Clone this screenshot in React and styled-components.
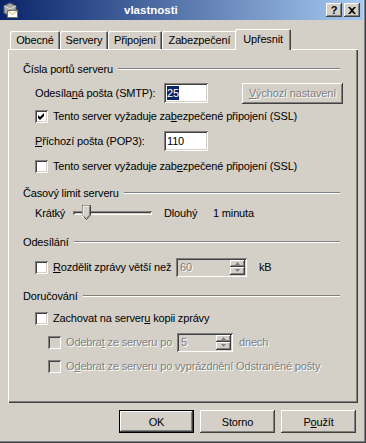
import React from 'react'
import styled, { createGlobalStyle, css } from 'styled-components'

const FACE = '#d4d0c8'
const SHADOW = '#808080'
const DARK = '#404040'
const NAVY = '#0a246a'

const GlobalStyle = createGlobalStyle`
  html, body {
    margin: 0;
    padding: 0;
    background: ${FACE};
  }
  body {
    font-family: 'Liberation Sans', Arial, sans-serif;
    font-size: 11px;
    letter-spacing: -0.16px;
    color: #000;
  }
`

const raised = css`
  box-shadow: inset -1px -1px ${DARK}, inset 1px 1px #fff,
    inset -2px -2px ${SHADOW}, inset 2px 2px ${FACE};
`

const sunken = css`
  box-shadow: inset 1px 1px ${SHADOW}, inset -1px -1px #fff,
    inset 2px 2px ${DARK}, inset -2px -2px ${FACE};
`

const disabledText = css`
  color: ${SHADOW};
  text-shadow: 1px 1px #fff;
`

const Window = styled.div`
  width: 366px;
  height: 443px;
  box-sizing: border-box;
  padding: 0 3px 3px 0;
  background: ${FACE};
  box-shadow: inset -1px -1px ${DARK}, inset -2px -2px ${SHADOW};
  display: flex;
  flex-direction: column;
`

const TitleBar = styled.div`
  height: 20px;
  display: flex;
  align-items: center;
  background: linear-gradient(to right, ${NAVY}, #a6caf0);
`

const IconBox = styled.svg`
  width: 16px;
  height: 16px;
  margin-left: 2px;
  flex: none;
`

const TitleText = styled.div`
  flex: 1;
  margin-left: 106px;
  color: #fff;
  font-weight: bold;
  font-size: 11.5px;
  letter-spacing: 0;
`

const CaptionButtons = styled.div`
  display: flex;
  gap: 2px;
  margin-right: 3px;
`

const CaptionButton = styled.div`
  width: 16px;
  height: 14px;
  background: ${FACE};
  ${raised};
  display: flex;
  align-items: center;
  justify-content: center;
  font-weight: bold;
  font-size: 11px;
  line-height: 1;
`

const Client = styled.div`
  flex: 1;
  display: flex;
  flex-direction: column;
  padding: 0 5px 0 8px;
`

const TabStrip = styled.div`
  height: 21px;
  margin-top: 9px;
  margin-bottom: -1px;
  padding-left: 2px;
  display: flex;
  align-items: flex-end;
  position: relative;
  z-index: 1;
`

const Tab = styled.div`
  width: ${(p) => p.$w}px;
  height: ${(p) => (p.$active ? 21 : 18)}px;
  margin: 0 ${(p) => (p.$active ? -2 : 0)}px ${(p) => (p.$active ? 0 : 1)}px;
  box-sizing: border-box;
  padding-bottom: ${(p) => (p.$active ? 2 : 0)}px;
  flex: none;
  display: flex;
  align-items: center;
  justify-content: center;
  background: ${FACE};
  border-radius: 2px 2px 0 0;
  box-shadow: inset 1px 1px #fff, inset -1px 0 ${DARK}, inset -2px 0 ${SHADOW};
  white-space: nowrap;
`

const Panel = styled.div`
  height: 354px;
  box-sizing: border-box;
  padding: 13px 18px 0 15px;
  box-shadow: inset 1px 1px #fff, inset -1px -1px ${DARK},
    inset -2px -2px ${SHADOW};
  display: flex;
  flex-direction: column;
`

const GroupHeader = styled.div`
  height: 14px;
  margin-top: ${(p) => p.$mt || 0}px;
  display: flex;
  align-items: center;
  gap: 5px;
  white-space: nowrap;
  &::after {
    content: '';
    flex: 1;
    border-top: 1px solid ${SHADOW};
    border-bottom: 1px solid #fff;
  }
`

const Row = styled.div`
  height: 20px;
  margin-top: ${(p) => p.$mt}px;
  padding-left: ${(p) => p.$indent || 12}px;
  display: flex;
  align-items: center;
  white-space: nowrap;
`

const Label = styled.span`
  width: ${(p) => (p.$w ? `${p.$w}px` : 'auto')};
  margin-left: ${(p) => p.$ml || 0}px;
  flex: none;
  ${(p) => p.$disabled && disabledText};
`

const Acc = styled.span`
  text-decoration: underline;
`

const Edit = styled.div`
  width: ${(p) => p.$w}px;
  height: 20px;
  box-sizing: border-box;
  padding: 0 3px;
  background: #fff;
  ${sunken};
  display: flex;
  align-items: center;
  flex: none;
`

const Selected = styled.span`
  background: ${NAVY};
  color: #fff;
  padding: 1px 0;
`

const PushButton = styled.div`
  width: ${(p) => p.$w}px;
  height: ${(p) => p.$h || 23}px;
  margin-left: ${(p) => p.$ml || 0}px;
  box-sizing: border-box;
  flex: none;
  display: flex;
  align-items: center;
  justify-content: center;
  background: ${FACE};
  ${raised};
  ${(p) => p.$disabled && disabledText};
  ${(p) =>
    p.$default &&
    css`
      box-shadow: inset 0 0 0 1px #000, inset -2px -2px ${DARK},
        inset 2px 2px #fff, inset -3px -3px ${SHADOW};
    `}
`

const CheckBox = styled.span`
  width: 13px;
  height: 13px;
  margin-right: 5px;
  flex: none;
  box-sizing: border-box;
  background: ${(p) => (p.$disabled ? FACE : '#fff')};
  ${sunken};
  display: flex;
  align-items: center;
  justify-content: center;
`

const SliderTrack = styled.div`
  width: 79px;
  height: 4px;
  position: relative;
  flex: none;
  ${sunken};
  background: ${FACE};
`

const Thumb = styled.svg`
  position: absolute;
  left: 9px;
  top: -6px;
  width: 9px;
  height: 15px;
`

const Spin = styled.div`
  width: ${(p) => p.$w}px;
  height: 19px;
  box-sizing: border-box;
  padding: 2px 2px 2px 4px;
  flex: none;
  display: flex;
  align-items: center;
  background: ${FACE};
  ${sunken};
  ${disabledText};
`

const SpinValue = styled.span`
  flex: 1;
`

const SpinButtons = styled.div`
  width: 15px;
  height: 15px;
  display: flex;
  flex-direction: column;
`

const SpinButton = styled.div`
  flex: 1;
  display: flex;
  align-items: center;
  justify-content: center;
  background: ${FACE};
  ${raised};
`

const ButtonBar = styled.div`
  display: flex;
  justify-content: flex-end;
  gap: 6px;
  margin-top: 7px;
  padding-right: 2px;
`

function TitleIcon() {
  return (
    <IconBox viewBox="0 0 16 16">
      <path d="M2 4 L8 1 L14 4 L14 11 L8 14 L2 11 Z" fill="#a8a8a8" stroke="#606060" />
      <path d="M2 4 L8 7 L14 4" fill="none" stroke="#e0e0e0" />
      <path d="M8 7 L8 14" stroke="#707070" />
      <rect x="5.5" y="8.5" width="10" height="7" fill="#fff" stroke="#707070" />
      <path d="M5.5 8.5 L10.5 12.5 L15.5 8.5" fill="none" stroke="#d8b040" />
    </IconBox>
  )
}

function CloseGlyph() {
  return (
    <svg width="8" height="7" viewBox="0 0 8 7">
      <path d="M0 0 L2 0 L4 2 L6 0 L8 0 L5 3.5 L8 7 L6 7 L4 5 L2 7 L0 7 L3 3.5 Z" fill="#000" />
    </svg>
  )
}

function Check({ checked, disabled }) {
  return (
    <CheckBox $disabled={disabled}>
      {checked && (
        <svg width="7" height="7" viewBox="0 0 7 7">
          <path d="M0 2 L2 4 L6 0 L6 3 L2 7 L0 5 Z" fill="#000" />
        </svg>
      )}
    </CheckBox>
  )
}

function SliderThumb() {
  return (
    <Thumb viewBox="0 0 9 15">
      <path d="M0.5 0.5 H8.5 V10 L4.5 14.5 L0.5 10 Z" fill={FACE} stroke={DARK} />
      <path d="M1 13 V1 H7.5" fill="none" stroke="#fff" />
      <path d="M7.5 1.5 V10 L4.5 13" fill="none" stroke={SHADOW} />
    </Thumb>
  )
}

function Arrow({ up }) {
  return (
    <svg width="5" height="3" viewBox="0 0 5 3">
      <path d={up ? 'M2.5 0 L5 3 L0 3 Z' : 'M0 0 L5 0 L2.5 3 Z'} fill={SHADOW} />
    </svg>
  )
}

function SpinBox({ value, width }) {
  return (
    <Spin $w={width}>
      <SpinValue>{value}</SpinValue>
      <SpinButtons>
        <SpinButton>
          <Arrow up />
        </SpinButton>
        <SpinButton>
          <Arrow />
        </SpinButton>
      </SpinButtons>
    </Spin>
  )
}

const tabs = [
  { label: 'Obecné', w: 50 },
  { label: 'Servery', w: 48 },
  { label: 'Připojení', w: 54 },
  { label: 'Zabezpečení', w: 75 },
  { label: 'Upřesnit', w: 56, active: true },
]

export default function App() {
  return (
    <>
      <GlobalStyle />
      <Window>
        <TitleBar>
          <TitleIcon />
          <TitleText>vlastnosti</TitleText>
          <CaptionButtons>
            <CaptionButton>?</CaptionButton>
            <CaptionButton>
              <CloseGlyph />
            </CaptionButton>
          </CaptionButtons>
        </TitleBar>
        <Client>
          <TabStrip>
            {tabs.map((t) => (
              <Tab key={t.label} $w={t.w} $active={t.active}>
                {t.label}
              </Tab>
            ))}
          </TabStrip>
          <Panel>
            <GroupHeader>Čísla portů serveru</GroupHeader>
            <Row $mt={7}>
              <Label $w={129}>
                Odesíla<Acc>n</Acc>á pošta (SMTP):
              </Label>
              <Edit $w={44}>
                <Selected>25</Selected>
              </Edit>
              <PushButton $w={101} $h={21} $ml={34} $disabled>
                <span>
                  <Acc>V</Acc>ýchozí nastavení
                </span>
              </PushButton>
            </Row>
            <Row $mt={3}>
              <Check checked />
              <Label>
                Tento server vyžaduje za<Acc>b</Acc>ezpečené připojení (SSL)
              </Label>
            </Row>
            <Row $mt={5}>
              <Label $w={129}>
                <Acc>P</Acc>říchozí pošta (POP3):
              </Label>
              <Edit $w={44}>110</Edit>
            </Row>
            <Row $mt={5}>
              <Check />
              <Label>
                Tento server vyžaduje zab<Acc>e</Acc>zpečené připojení (SSL)
              </Label>
            </Row>

            <GroupHeader $mt={10}>Časový limit serveru</GroupHeader>
            <Row $mt={3}>
              <Label $w={38}>Krátký</Label>
              <SliderTrack>
                <SliderThumb />
              </SliderTrack>
              <Label $w={49} $ml={12}>
                Dlouhý
              </Label>
              <Label>1 minuta</Label>
            </Row>

            <GroupHeader $mt={12}>Odesílání</GroupHeader>
            <Row $mt={8}>
              <Check />
              <Label $w={123}>
                <Acc>R</Acc>ozdělit zprávy větší než
              </Label>
              <SpinBox value="60" width={71} />
              <Label $ml={12}>kB</Label>
            </Row>

            <GroupHeader $mt={12}>Doručování</GroupHeader>
            <Row $mt={5}>
              <Check />
              <Label>
                Zachovat na server<Acc>u</Acc> kopii zprávy
              </Label>
            </Row>
            <Row $mt={4} $indent={25}>
              <Check disabled />
              <Label $w={111} $disabled>
                Odebra<Acc>t</Acc> ze serveru po
              </Label>
              <SpinBox value="5" width={56} />
              <Label $ml={6} $disabled>
                dnech
              </Label>
            </Row>
            <Row $mt={4} $indent={25}>
              <Check disabled />
              <Label $disabled>
                O<Acc>d</Acc>ebrat ze serveru po vyprázdnění Odstraněné pošty
              </Label>
            </Row>
          </Panel>
          <ButtonBar>
            <PushButton $w={75} $default>
              OK
            </PushButton>
            <PushButton $w={75}>Storno</PushButton>
            <PushButton $w={75}>
              <span>
                P<Acc>o</Acc>užít
              </span>
            </PushButton>
          </ButtonBar>
        </Client>
      </Window>
    </>
  )
}
